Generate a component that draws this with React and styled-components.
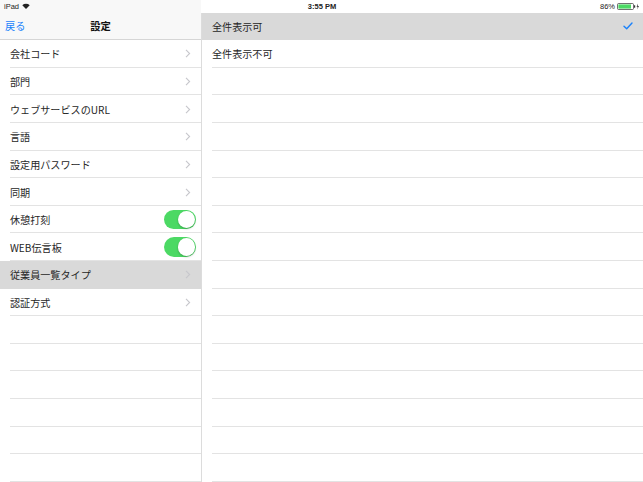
import React from "react";
import styled, { createGlobalStyle } from "styled-components";

const ROW = 27.62;

const Global = createGlobalStyle`
  html, body { margin: 0; padding: 0; background: #fff; }
  body { font-family: "Noto Sans CJK JP", "Noto Sans", "Liberation Sans", sans-serif; -webkit-font-smoothing: antialiased; }
  #root { width: 643px; height: 482px; overflow: hidden; }
`;

const Screen = styled.div`
  width: 643px;
  height: 482px;
  display: flex;
  flex-direction: column;
  overflow: hidden;
  background: #fff;
`;

const StatusBar = styled.div`
  height: 12.56px;
  flex: none;
  display: grid;
  grid-template-columns: 1fr auto 1fr;
  align-items: center;
  padding: 0 3px 0 4px;
  font-family: "Liberation Sans", "Noto Sans", sans-serif;
  font-size: 7.5px;
  color: #222;
  background: linear-gradient(to right, #f8f8f8 201px, #fff 201px);
`;

const StatusLeft = styled.div`
  display: flex;
  align-items: center;
  gap: 3px;
`;

const StatusTime = styled.div`
  font-weight: 700;
  font-size: 7.5px;
`;

const StatusRight = styled.div`
  display: flex;
  align-items: center;
  justify-content: flex-end;
  gap: 2px;
`;

const Body = styled.div`
  flex: 1;
  display: flex;
  min-height: 0;
`;

const Master = styled.div`
  width: 201px;
  flex: none;
  border-right: 1px solid #dcdcdc;
  display: flex;
  flex-direction: column;
  overflow: hidden;
`;

const Detail = styled.div`
  flex: 1;
  display: flex;
  flex-direction: column;
  overflow: hidden;
`;

const NavBar = styled.div`
  height: ${ROW}px;
  flex: none;
  background: #f8f8f8;
  border-bottom: 1px solid #d6d6d6;
  box-sizing: border-box;
  display: grid;
  grid-template-columns: 1fr auto 1fr;
  align-items: center;
  padding: 0 5px;
`;

const BackButton = styled.span`
  color: #1a82fb;
  font-size: 10.2px;
`;

const NavTitle = styled.span`
  font-weight: 700;
  font-size: 10.3px;
  color: #111;
`;

const List = styled.div`
  display: flex;
  flex-direction: column;
`;

const Row = styled.div`
  height: ${ROW}px;
  flex: none;
  box-sizing: border-box;
  display: flex;
  align-items: center;
  padding-left: 10px;
  position: relative;
  background: ${(p) => (p.$selected ? "#d9d9d9" : "#fff")};
  &::after {
    content: "";
    position: absolute;
    left: ${(p) => (p.$selected ? "0" : "10px")};
    right: 0;
    bottom: 0;
    height: 1px;
    background: ${(p) => (p.$selected ? "transparent" : "#e3e3e3")};
  }
`;

const Label = styled.span`
  flex: 1;
  font-size: 10.1px;
  color: #262626;
  white-space: nowrap;
  transform: translateY(-0.5px);
`;

const Accessory = styled.span`
  display: flex;
  align-items: center;
  justify-content: center;
  padding-right: ${(p) => p.$pad || 10}px;
`;

const Switch = styled.span`
  width: 32px;
  height: 19.5px;
  border-radius: 10px;
  background: #4cd964;
  position: relative;
  display: block;
  margin-right: 5px;
`;

const Knob = styled.span`
  position: absolute;
  right: 1px;
  top: 1px;
  width: 17.5px;
  height: 17.5px;
  border-radius: 50%;
  background: #fff;
  box-shadow: 0 1px 2px rgba(0,0,0,0.25);
`;

const Chevron = () => (
  <svg width="6" height="9" viewBox="0 0 6 9">
    <path d="M1 0.8 L4.6 4.5 L1 8.2" fill="none" stroke="#c7c7cc" strokeWidth="1.1" />
  </svg>
);

const Check = () => (
  <svg width="10" height="8" viewBox="0 0 10 8">
    <path d="M1 4.2 L3.7 6.8 L9 1" fill="none" stroke="#1a82fb" strokeWidth="1.4" strokeLinecap="round" strokeLinejoin="round" />
  </svg>
);

const Wifi = () => (
  <svg width="8" height="6" viewBox="0 0 8 6">
    <path d="M0.3 2.2 A5.5 5.5 0 0 1 7.7 2.2 L4 6 Z" fill="#222" />
  </svg>
);

const Battery = () => (
  <svg width="23" height="7" viewBox="0 0 23 7">
    <rect x="0.5" y="0.5" width="16" height="6" rx="1" fill="none" stroke="#333" strokeWidth="0.7" />
    <rect x="1.4" y="1.4" width="12.6" height="4.2" fill="#4cd964" />
    <rect x="17" y="2.3" width="1.2" height="2.4" fill="#333" />
    <path d="M21 0.5 L19.6 3.8 L20.8 3.8 L20.2 6.5 L21.9 2.9 L20.7 2.9 Z" fill="#222" />
  </svg>
);

const masterItems = [
  { label: "会社コード", type: "chevron" },
  { label: "部門", type: "chevron" },
  { label: "ウェブサービスのURL", type: "chevron" },
  { label: "言語", type: "chevron" },
  { label: "設定用パスワード", type: "chevron" },
  { label: "同期", type: "chevron" },
  { label: "休憩打刻", type: "switch" },
  { label: "WEB伝言板", type: "switch" },
  { label: "従業員一覧タイプ", type: "chevron", selected: true },
  { label: "認証方式", type: "chevron" },
];

const detailItems = [
  { label: "全件表示可", checked: true },
  { label: "全件表示不可" },
];

export default function App() {
  const masterEmpty = 16 - masterItems.length;
  const detailEmpty = 17 - detailItems.length;
  return (
    <>
      <Global />
      <Screen>
        <StatusBar>
          <StatusLeft>
            <span>iPad</span>
            <Wifi />
          </StatusLeft>
          <StatusTime>3:55 PM</StatusTime>
          <StatusRight>
            <span>86%</span>
            <Battery />
          </StatusRight>
        </StatusBar>
        <Body>
          <Master>
            <NavBar>
              <BackButton>戻る</BackButton>
              <NavTitle>設定</NavTitle>
              <span />
            </NavBar>
            <List>
              {masterItems.map((it) => (
                <Row key={it.label} $selected={it.selected}>
                  <Label>{it.label}</Label>
                  {it.type === "chevron" ? (
                    <Accessory $pad={10}>
                      <Chevron />
                    </Accessory>
                  ) : (
                    <Switch>
                      <Knob />
                    </Switch>
                  )}
                </Row>
              ))}
              {Array.from({ length: masterEmpty }).map((_, i) => (
                <Row key={"me" + i} />
              ))}
            </List>
          </Master>
          <Detail>
            <List>
              {detailItems.map((it) => (
                <Row key={it.label} $selected={it.checked}>
                  <Label>{it.label}</Label>
                  {it.checked && (
                    <Accessory $pad={10}>
                      <Check />
                    </Accessory>
                  )}
                </Row>
              ))}
              {Array.from({ length: detailEmpty }).map((_, i) => (
                <Row key={"de" + i} />
              ))}
            </List>
          </Detail>
        </Body>
      </Screen>
    </>
  );
}
